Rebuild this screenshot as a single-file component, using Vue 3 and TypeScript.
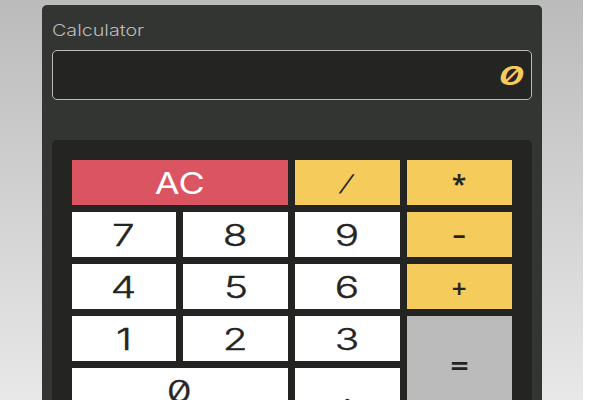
<script setup lang="ts">
import { ref } from 'vue'

interface Key {
  label: string
  name: string
  kind: 'digit' | 'operator' | 'clear' | 'equals'
}

const display = ref<string>('0')

const keys: Key[] = [
  { label: 'AC', name: 'clear', kind: 'clear' },
  { label: '/', name: 'divide', kind: 'operator' },
  { label: '*', name: 'multiply', kind: 'operator' },
  { label: '7', name: 'seven', kind: 'digit' },
  { label: '8', name: 'eight', kind: 'digit' },
  { label: '9', name: 'nine', kind: 'digit' },
  { label: '-', name: 'subtract', kind: 'operator' },
  { label: '4', name: 'four', kind: 'digit' },
  { label: '5', name: 'five', kind: 'digit' },
  { label: '6', name: 'six', kind: 'digit' },
  { label: '+', name: 'add', kind: 'operator' },
  { label: '1', name: 'one', kind: 'digit' },
  { label: '2', name: 'two', kind: 'digit' },
  { label: '3', name: 'three', kind: 'digit' },
  { label: '=', name: 'equals', kind: 'equals' },
  { label: '0', name: 'zero', kind: 'digit' },
  { label: '.', name: 'decimal', kind: 'digit' },
]
</script>

<template>
  <div class="page">
    <main class="calculator">
      <h1 class="title"><span>Calculator</span></h1>
      <div class="display"><span>{{ display }}</span></div>
      <div class="keypad">
        <button v-for="key in keys" :key="key.name" class="key" :class="[key.kind, key.name]">
          <span>{{ key.label }}</span>
        </button>
      </div>
    </main>
  </div>
</template>

<style>
body {
  background: #fff;
  overflow: hidden;
}
</style>

<style scoped>
.page {
  box-sizing: border-box;
  width: 583px;
  height: 400px;
  padding-top: 5px;
  overflow: hidden;
  background: linear-gradient(#bbb, #e8e8e8);
  font-family: Inter, "Liberation Sans", sans-serif;
}
.calculator {
  box-sizing: border-box;
  width: 500px;
  height: 480px;
  margin: 0 auto;
  padding: 10px;
  border-radius: 5px;
  background: #333532;
}
.title {
  height: 35px;
  margin: 0;
  color: #bbb;
  font-size: 16px;
  font-weight: 300;
  line-height: 30px;
}
.title span {
  display: inline-block;
  transform: scaleX(1.23);
  transform-origin: left;
}
.display {
  box-sizing: border-box;
  display: flex;
  align-items: center;
  justify-content: flex-end;
  height: 50px;
  padding-right: 6px;
  border: 1px solid #bbb;
  border-radius: 5px;
  background: #242422;
  color: #f5cb5c;
  font-size: 26px;
  font-weight: 600;
  font-style: italic;
  font-feature-settings: "zero";
}
.display span {
  display: inline-block;
  transform: scaleX(1.5);
  transform-origin: right;
}
.keypad {
  display: grid;
  grid-template-columns: repeat(4, 1fr);
  grid-auto-rows: 45px;
  gap: 7px;
  margin-top: 40px;
  padding: 20px;
  border-radius: 5px;
  background: #242422;
}
.key {
  display: flex;
  align-items: center;
  justify-content: center;
  min-width: 0;
  padding: 0;
  border: 0;
  background: #fff;
  color: #242422;
  font-family: inherit;
  font-size: 30px;
  font-weight: 300;
  line-height: 1;
  font-feature-settings: "zero";
}
.key span {
  display: inline-block;
  transform: scaleX(1.35);
}
.digit {
  -webkit-text-stroke: 0.4px #242422;
}
.clear {
  grid-column: span 2;
  background: #db5461;
  color: #fff;
  font-weight: 400;
}
.clear span {
  transform: scaleX(1.2);
}
.operator {
  background: #f5cb5c;
}
.divide span {
  font-size: 22px;
  font-weight: 400;
  transform: scaleX(1.15) skewX(-20deg);
}
.multiply,
.subtract,
.add,
.equals {
  font-family: "Noto Sans", sans-serif;
  font-size: 26px;
  font-weight: 600;
}
.multiply span {
  transform: none;
}
.subtract span {
  transform: translateY(-2px) scaleX(1.65);
}
.add span {
  transform: translateY(1px);
}
.equals span {
  transform: scale(1.25, 1.1);
}
.equals {
  grid-column: 4;
  grid-row: 4 / span 2;
  background: #bbb;
}
.zero {
  grid-column: 1 / span 2;
}
.decimal span {
  font-weight: 400;
  transform: translateY(1px);
}
</style>
